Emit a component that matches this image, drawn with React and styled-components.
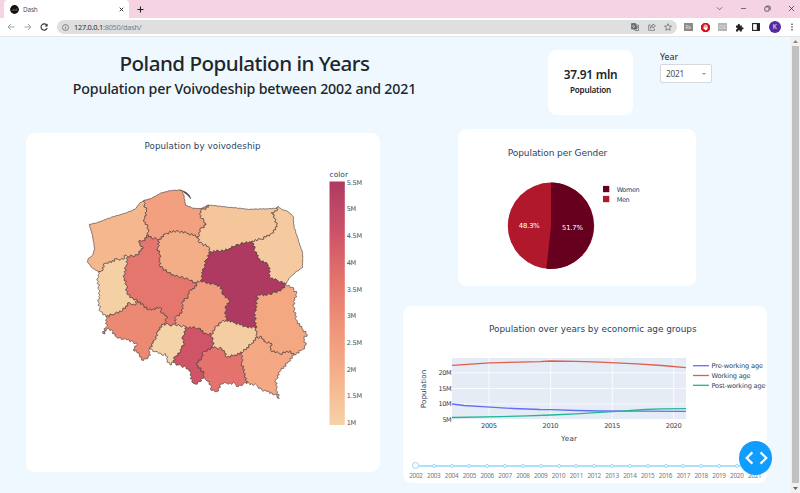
import React from "react";
import styled, { createGlobalStyle } from "styled-components";

const GlobalStyle = createGlobalStyle`
  * { box-sizing: border-box; }
  html, body { margin: 0; padding: 0; overflow: hidden; }
  body { font-family: "Noto Sans", "Open Sans", sans-serif; color: #212529; }
  svg { display: block; }
`;

const Window = styled.div`
  width: 800px;
  height: 493px;
  display: flex;
  flex-direction: column;
  overflow: hidden;
`;

/* ---------- browser frame ---------- */

const TabStrip = styled.header`
  height: 18px;
  flex: none;
  display: flex;
  align-items: stretch;
  background: #f5d3e3;
  padding-left: 4px;
`;

const Tab = styled.div`
  width: 125px;
  display: flex;
  align-items: center;
  padding: 0 5px 0 6px;
  gap: 4px;
  background: #fff;
  border-radius: 4px 4px 0 0;
  font-size: 6.4px;
  letter-spacing: -0.15px;
  color: #505256;
`;

const TabTitle = styled.span`
  flex: 1;
`;

const NewTab = styled.div`
  display: flex;
  align-items: center;
  padding-left: 8px;
  flex: 1;
`;

const WindowButtons = styled.div`
  display: flex;
  align-items: center;
  gap: 17px;
  padding: 0 5.5px 2px 0;
`;

const Toolbar = styled.div`
  height: 19px;
  flex: none;
  display: flex;
  align-items: center;
  background: #fff;
  border-bottom: 1px solid #e3e6e9;
  padding: 0 5px 0 7px;
`;

const NavButtons = styled.div`
  display: flex;
  gap: 8.5px;
  width: 50px;
`;

const AddressBar = styled.div`
  width: 620px;
  height: 14.6px;
  border-radius: 8px;
  background: #dfdfe0;
  display: flex;
  align-items: center;
  padding: 0 5px 0 5px;
`;

const Url = styled.span`
  flex: 1;
  padding-left: 5px;
  font-size: 7.4px;
  letter-spacing: -0.26px;
  color: #7b7d80;
  b { font-weight: 400; color: #2c2e31; }
`;

const AddressIcons = styled.div`
  display: flex;
  align-items: center;
  gap: 8.5px;
`;

const Extensions = styled.div`
  flex: 1;
  display: flex;
  align-items: center;
  justify-content: space-between;
  padding-left: 7px;
`;

const ExtensionTile = styled.span`
  width: 8.5px;
  height: 8.5px;
  background: ${(p) => p.$color};
  color: #e6e6e6;
  font-size: 5px;
  line-height: 8px;
  text-align: center;
`;

const Avatar = styled.span`
  width: 12px;
  height: 12px;
  border-radius: 50%;
  background: #512da8;
  color: #fff;
  font-size: 6.5px;
  line-height: 12px;
  text-align: center;
`;

const Icon = ({ size = 9, width = size, color = "#5f6368", stroke = 1, children }) => (
  <svg width={width} height={size} viewBox={`0 0 ${width} ${size}`} fill="none" stroke={color} strokeWidth={stroke}>
    {children}
  </svg>
);

/* ---------- page ---------- */

const Viewport = styled.div`
  flex: 1;
  display: flex;
  min-height: 0;
`;

const Page = styled.main`
  flex: 1;
  display: flex;
  gap: 23px;
  padding-left: 26px;
  background: #eff8ff;
`;

const Scrollbar = styled.div`
  width: 10px;
  display: flex;
  flex-direction: column;
  align-items: center;
  justify-content: space-between;
  background: #f1f1f1;
  padding: 3px 0;
`;

const Thumb = styled.div`
  width: 7px;
  flex: 1;
  margin: 2.5px 0 4px;
  background: #c1c1c1;
`;

const LeftColumn = styled.section`
  width: 354px;
  display: flex;
  flex-direction: column;
`;

const Heading = styled.div`
  height: 96px;
  width: 437px;
  padding-top: 12px;
  text-align: center;
  white-space: nowrap;
`;

const Title = styled.h1`
  margin: 0;
  font-size: 20.6px;
  line-height: 29px;
  letter-spacing: -0.5px;
  font-weight: 500;
`;

const Subtitle = styled.h2`
  margin: 0;
  font-size: 14.2px;
  line-height: 22px;
  letter-spacing: -0.16px;
  font-weight: 500;
`;

const Card = styled.div`
  flex: none;
  width: ${(p) => p.$width}px;
  height: ${(p) => p.$height}px;
  margin-left: ${(p) => p.$indent || 0}px;
  background: #fff;
  border-radius: 8.5px;
`;

const RightColumn = styled.section`
  width: 364px;
  display: flex;
  flex-direction: column;
`;

const Controls = styled.div`
  height: 91.5px;
  display: flex;
  gap: 27px;
  padding: 13px 0 0 145px;
`;

const StatCard = styled(Card)`
  display: flex;
  flex-direction: column;
  align-items: center;
  padding-top: 14px;
`;

const StatValue = styled.div`
  font-size: 11.9px;
  line-height: 20px;
  letter-spacing: -0.25px;
  font-weight: 600;
  white-space: nowrap;
`;

const StatLabel = styled.div`
  font-size: 8.1px;
  line-height: 12px;
  letter-spacing: -0.2px;
  font-weight: 600;
`;

const Field = styled.label`
  width: 52px;
  font-size: 8.8px;
  line-height: 14px;
`;

const Select = styled.div`
  height: 19px;
  display: flex;
  align-items: center;
  justify-content: space-between;
  padding: 0 5px;
  background: #fff;
  border: 1px solid #d4d9dd;
  border-radius: 2px;
  font-size: 8.2px;
  letter-spacing: -0.2px;
  color: #4a4c50;
`;

const Caret = styled.span`
  border: 2.5px solid transparent;
  border-top-color: #999;
  border-bottom: 0;
`;

const RightCards = styled.div`
  display: flex;
  flex-direction: column;
  gap: 20px;
`;

const Slider = styled.div`
  display: grid;
  grid-template-columns: repeat(20, 17.83px);
  margin: 3px 0 0 4px;
  height: 21px;
  align-items: start;
`;

const Mark = styled.div`
  display: flex;
  flex-direction: column;
  align-items: center;
  background: linear-gradient(#abe2fb, #abe2fb) no-repeat;
  background-size: ${(p) => (p.$edge ? "50%" : "100%")} 2px;
  background-position: ${(p) => (p.$edge === "start" ? "100%" : "0")} 3px;
  font-size: 6.4px;
  line-height: 8px;
  letter-spacing: -0.3px;
  color: #777;
`;

const Dot = styled.span`
  width: ${(p) => (p.$active ? 7 : 4)}px;
  height: ${(p) => (p.$active ? 7 : 4)}px;
  margin: ${(p) => (p.$active ? "0.5px 0 3px" : "2px 0 4.5px")};
  border: 1px solid #9bd8f5;
  border-radius: 50%;
  background: #fff;
`;

const DebugButton = styled.div`
  position: absolute;
  left: 738.7px;
  top: 441.3px;
  width: 33.6px;
  height: 33.6px;
  border-radius: 50%;
  background: #119dff;
`;

const Label = styled.text`
  font-family: "DejaVu Sans", sans-serif;
  font-size: ${(p) => p.$size}px;
  fill: ${(p) => p.$fill || "#2a3f5f"};
`;

/* ---------- map ---------- */

/* Borders between voivodeships, three units to the pixel. */
const borders = {
  LA: "55,275 38,265 22,245 24,237 38,225 44,205 38,170 28,133 45,130 100,110 140,98 165,88 180,68 195,60",
  AE: "195,60 215,55 245,38 270,32 302,30 312,45 316,75 340,85 365,85 385,75",
  EF: "385,75 430,80 510,88 590,85 595,80",
  FM: "595,80 605,88 625,95 640,110 642,140 655,180 668,220 668,262 645,278 630,292 617,313",
  Ma: "617,313 635,322 650,340 640,380 650,420 665,445 682,464 672,475 678,495 668,508 642,525",
  ac: "642,525 625,545 600,575 587,600 590,625 598,655 585,643 545,630 530,615 500,610",
  cY: "500,610 490,612 475,620 465,610 440,610 425,612 410,635 395,632 392,615 378,600 368,595",
  YT: "368,595 360,605 345,612 335,605 332,580 318,562 295,555 280,547",
  TS: "280,547 270,555 262,540 258,522 245,525 225,515 210,507",
  SO: "210,507 207,520 212,525 205,530 190,542 178,525 160,508 172,495 160,485 130,478 105,468 95,450 80,447 75,462 68,460 80,440 78,410",
  OL: "78,410 62,395 55,365 58,330 52,295 55,275",
  AB: "195,60 193,75 200,95 192,118 203,140 205,165",
  BK: "205,165 190,182 175,185 180,195 190,205 172,225 143,230",
  KL: "143,230 138,225 130,238 110,237 85,250 75,250 65,273 55,275",
  BC: "205,165 215,175 238,178",
  CD: "238,178 260,160 290,152 320,160 355,170",
  DE: "355,170 360,150 378,135 372,122 360,112 362,92 385,82 385,75",
  DH: "355,170 357,188 385,200 392,215",
  HG: "392,215 430,213 460,200 490,190 517,183",
  GF: "517,183 545,178 575,160 592,140 585,115 575,98 590,93 595,80",
  GM: "517,183 525,215 540,240 565,255 572,295 595,303 617,313",
  HI: "392,215 378,240 372,265 362,303",
  CJ: "238,178 232,205 240,225 240,260 265,278 295,290 325,298 345,308",
  JI: "345,308 362,303",
  KN: "143,230 137,260 132,285 138,315 140,340 155,353 172,362",
  NO: "172,362 165,376 148,368 125,395 105,400 78,410",
  NP: "172,362 205,390 240,382 245,400 260,408 258,425 250,433",
  PQ: "250,433 265,432 275,438 285,433",
  QJ: "285,433 288,410 305,400 308,365 325,350 330,330 350,318 345,308",
  QR: "285,433 300,438 320,442",
  RU: "320,442 355,445 375,460 395,463",
  UV: "395,463 405,445 425,425 438,420",
  VI: "438,420 436,385 448,362 430,345 422,320 395,312 362,303",
  VW: "438,420 460,428 500,440 528,445",
  WM: "528,445 525,395 535,345 570,343 605,330 617,313",
  Wb: "528,445 530,460 532,472",
  ba: "532,472 545,470 552,485 575,490 572,510 600,522 630,512 642,525",
  bZ: "532,472 515,490 487,518",
  ZX: "487,518 465,525 440,532 425,505 400,503",
  UX: "395,463 398,480 400,503",
  XY: "400,503 370,515 365,535 350,555 372,580 368,595",
  Zc: "487,518 485,550 495,580 500,610",
  PS: "250,433 235,450 225,480 210,507",
  RT: "320,442 308,470 312,490 302,515 285,530 280,547",
};

const smooth = new Set(["LA", "AE", "EF", "FM"]);
const wiggle = [0, 4, -2.8, 2.6, -4, -1.2, 3.6, -3.8, 1.8, -2.8, 4.2];

/* Breaks a border into short steps that stray to either side of its line. */
function roughen(points, amount) {
  const out = [points[0]];
  let n = 0;
  for (let i = 1; i < points.length; i++) {
    const [x0, y0] = points[i - 1];
    const [x1, y1] = points[i];
    const length = Math.hypot(x1 - x0, y1 - y0);
    const steps = Math.max(1, Math.round(length / 5));
    for (let s = 1; s < steps; s++) {
      const t = s / steps;
      const w = wiggle[++n % wiggle.length] * amount;
      out.push([x0 + (x1 - x0) * t - ((y1 - y0) / length) * w, y0 + (y1 - y0) * t + ((x1 - x0) / length) * w]);
    }
    out.push(points[i]);
  }
  return out;
}

const lines = Object.fromEntries(
  Object.entries(borders).map(([key, text]) => [
    key,
    roughen(text.split(" ").map((p) => p.split(",").map(Number)), smooth.has(key) ? 0.2 : 0.9),
  ])
);

function outline(ring) {
  const points = ring.split(" ").flatMap((key) => {
    if (lines[key]) return lines[key];
    return [...lines[key[1] + key[0]]].reverse();
  });
  return "M" + points.map(([x, y]) => `${x.toFixed(1)} ${y.toFixed(1)}`).join("L") + "Z";
}

const voivodeships = [
  ["LA AB BK KL", "#f5b88e"],
  ["AE ED DC CB BA", "#f3a080"],
  ["EF FG GH HD DE", "#f5c59b"],
  ["FM MG GF", "#f5caa0"],
  ["CD DH HI IJ JC", "#f3ad87"],
  ["BC CJ JQ QP PN NK KB", "#e5766d"],
  ["LK KN NO OL", "#f5d0a5"],
  ["HG GM MW WV VI IH", "#ae3a62"],
  ["JI IV VU UR RQ QJ", "#f29c7e"],
  ["ON NP PS SO", "#ec8973"],
  ["PQ QR RT TS SP", "#f5d3a8"],
  ["RU UX XY YT TR", "#cf5468"],
  ["UV VW Wb bZ ZX XU", "#f5cda2"],
  ["XZ Zc cY YX", "#e4736d"],
  ["Zb ba ac cZ", "#f4a984"],
  ["WM Ma ab bW", "#f3a882"],
];

const scaleTicks = ["5.5M", "5M", "4.5M", "4M", "3.5M", "3M", "2.5M", "2M", "1.5M", "1M"];

const VoivodeshipMap = () => (
  <svg width="354" height="339" viewBox="26 133 354 339">
    <defs>
      <linearGradient id="scale" x1="0" y1="0" x2="0" y2="1">
        <stop offset="0" stopColor="#ae3a62" />
        <stop offset="0.22" stopColor="#cf5468" />
        <stop offset="0.42" stopColor="#e5766d" />
        <stop offset="0.62" stopColor="#f0977c" />
        <stop offset="0.8" stopColor="#f5b28a" />
        <stop offset="1" stopColor="#f6d2a9" />
      </linearGradient>
    </defs>
    <Label $size={8.7} x="144.5" y="149" textLength="116">Population by voivodeship</Label>
    <g transform="translate(80 180) scale(0.33333)" stroke="#4c3c3c" strokeWidth="1.9" strokeLinejoin="round">
      {voivodeships.map(([ring, color]) => (
        <path key={ring} d={outline(ring)} fill={color} />
      ))}
      <path d="M302 30L318 37L328 46L332 56L323 45L310 36" fill="#4c3c3c" />
    </g>
    <Label $size={7.4} x="329.5" y="176.5" textLength="18.5">color</Label>
    <rect x="329.5" y="181.5" width="15.3" height="243.5" fill="url(#scale)" />
    {scaleTicks.map((tick, i) => (
      <Label key={tick} $size={6.5} $fill="#3d4f6d" x="346.7" y={184.7 + i * 26.7} textLength={tick.length > 2 ? 15.5 : 9.5}>
        {tick}
      </Label>
    ))}
  </svg>
);

const GenderPie = () => (
  <svg width="238" height="157" viewBox="458 128.5 238 157">
    <Label $size={9} x="507.8" y="155.3" textLength="99.5">Population per Gender</Label>
    <circle cx="551" cy="225.3" r="43.2" fill="#b2182b" />
    <path d="M551 182.1A43.2 43.2 0 1 1 546.4 268.3L551 225.3Z" fill="#67001f" />
    <Label $size={6.8} $fill="#fff" x="518.8" y="227.3" textLength="21">48.3%</Label>
    <Label $size={6.8} $fill="#fff" x="562" y="229.2" textLength="21">51.7%</Label>
    <rect x="603" y="185.4" width="6.3" height="6.3" fill="#67001f" />
    <rect x="603" y="195.4" width="6.3" height="6.3" fill="#b2182b" />
    <Label $size={6.5} x="616.7" y="191.2" textLength="23">Women</Label>
    <Label $size={6.5} x="616.7" y="201.2" textLength="13">Men</Label>
  </svg>
);

const series = [
  ["Pre-working age", "#636efa", "452,403.5 464,405 490,406.7 513,408 540,409 551,409.1 576,410 600,410.5 637,410.7 686,410.8", 51.5],
  ["Working age", "#dd5f4c", "452,364.8 490,362.3 540,361.2 550,360.5 576,360.8 600,361.7 637,363.3 662,365 686,367.2", 39],
  ["Post-working age", "#20b894", "452,417 500,416.2 527,415.3 551,414.5 576,413.3 600,411.8 625,410.4 645,409 662,408.4 686,408.2", 54],
];

const AgeChart = () => (
  <svg width="364" height="153" viewBox="403 305.5 364 153">
    <Label $size={8.9} x="489" y="331.5" textLength="207.5">Population over years by economic age groups</Label>
    <rect x="452" y="357.5" width="234" height="61.5" fill="#e5ecf6" />
    <g stroke="#fff" strokeWidth="0.8">
      {[372.3, 388, 403.5, 419].map((y) => <path key={y} d={`M452 ${y}H686`} />)}
      {[489, 550.7, 612.3, 673.7].map((x) => <path key={x} d={`M${x} 357.5V419`} />)}
    </g>
    {["20M", "15M", "10M", "5M"].map((tick, i) => (
      <Label key={tick} $size={6.5} x="451.5" y={374.8 + i * 15.5} textAnchor="end" textLength={tick.length > 2 ? 13 : 9}>{tick}</Label>
    ))}
    {["2005", "2010", "2015", "2020"].map((tick, i) => (
      <Label key={tick} $size={6.7} x={489 + i * 61.6} y="427" textAnchor="middle" textLength="16">{tick}</Label>
    ))}
    <Label $size={7.2} x="569" y="440.8" textAnchor="middle" textLength="16">Year</Label>
    <Label $size={7.2} transform="translate(426 388.5) rotate(-90)" textAnchor="middle" textLength="38.5">Population</Label>
    {series.map(([name, color, points, length], i) => (
      <g key={name}>
        <polyline points={points} fill="none" stroke={color} strokeWidth="1.3" />
        <path d={`M693 ${365.2 + i * 9.8}h16`} stroke={color} strokeWidth="1.3" />
        <Label $size={6.6} x="711.5" y={367.6 + i * 9.8} textLength={length}>{name}</Label>
      </g>
    ))}
  </svg>
);

const years = Array.from({ length: 20 }, (_, i) => 2002 + i);
const edgeOf = (i) => (i === 0 ? "start" : i === years.length - 1 ? "end" : undefined);

export default function App() {
  return (
    <Window>
      <GlobalStyle />
      <TabStrip>
        <Tab>
          <svg width="9" height="9" viewBox="0 0 9 9">
            <circle cx="4.5" cy="4.5" r="4.4" fill="#111" />
            <path d="M2.3 6V4.5M3.8 6V3.8M5.2 6V4.2M6.7 6V3.4" stroke="#777" strokeWidth="0.7" />
          </svg>
          <TabTitle>Dash</TabTitle>
          <Icon size={5} color="#222" stroke={0.9}><path d="M0.7 0.7l3.6 3.6M4.3 0.7L0.7 4.3" /></Icon>
        </Tab>
        <NewTab>
          <Icon size={7} color="#222" stroke={1.1}><path d="M3.5 0.5v6M0.5 3.5h6" /></Icon>
        </NewTab>
        <WindowButtons>
          <Icon size={7} stroke={0.8} color="#555"><path d="M1 2.3l2.5 2.5L6 2.3" /></Icon>
          <Icon size={7} width={7} stroke={0.8} color="#555"><path d="M1 3.5h5" /></Icon>
          <Icon size={7} stroke={0.8} color="#444"><rect x="0.8" y="1.9" width="4.2" height="4.2" rx="0.8" /><path d="M2.2 1.1h3q1 0 1 1v3" /></Icon>
          <Icon size={7} stroke={0.8} color="#444"><path d="M1 1l5 5M6 1L1 6" /></Icon>
        </WindowButtons>
      </TabStrip>
      <Toolbar>
        <NavButtons>
          <Icon size={8} stroke={0.9} color="#96989b"><path d="M7.5 4H1.2M4 1L1 4l3 3" /></Icon>
          <Icon size={8} stroke={0.9} color="#96989b"><path d="M0.5 4h6.3M4 1l3 3-3 3" /></Icon>
          <Icon size={8} stroke={1.1} color="#333"><path d="M6.6 2.1A3.1 3.1 0 1 0 7.1 5" /><path d="M7.6 0.5v3H4.6z" fill="#333" stroke="none" /></Icon>
        </NavButtons>
        <AddressBar>
          <Icon size={7} stroke={0.7}><circle cx="3.5" cy="3.5" r="3" /><path d="M3.5 3v2.2M3.5 1.7v0.7" /></Icon>
          <Url><b>127.0.0.1</b>:8050/dash/</Url>
          <AddressIcons>
            <Icon size={8} stroke={0.7}><path d="M0.5 0.5h4l1.5 5.5H0.5z" fill="#5f6368" /><path d="M5 2h2.5v5.5H4L3.3 6M4.8 3.7h2.3M5.8 3q0.5 2.5-0.8 3" /><path d="M3.6 2.6A1.2 1.2 0 1 0 3.8 3.6H2.8" stroke="#dfdfe0" /></Icon>
            <Icon size={8} stroke={0.7}><path d="M2.8 2H0.7v5.3h5.8V5.7M5 1l2.5 2L5 5V3.9Q3.3 3.8 2.2 5.3 2.5 2.3 5 2.2z" /></Icon>
            <Icon size={8} stroke={0.7}><path d="M4 0.7l1 2.3 2.5.2-1.9 1.6.6 2.5L4 6 1.8 7.3l.6-2.5L.5 3.2 3 3z" /></Icon>
          </AddressIcons>
        </AddressBar>
        <Extensions>
          <ExtensionTile $color="#8a8a8a">Rs</ExtensionTile>
          <svg width="9" height="9" viewBox="0 0 9 9">
            <path d="M2.6 0h3.8L9 2.6v3.8L6.4 9H2.6L0 6.4V2.6z" fill="#d3121b" />
            <path d="M3.2 5V2.6M4.2 4.6V1.8M5.2 4.6V2.1M6.1 5V2.8" stroke="#fff" strokeWidth="0.8" strokeLinecap="round" />
            <path d="M2.8 4.4h3.7v1.4q-.4 1.4-1.7 1.4-1 0-1.5-1.2L2 4.9z" fill="#fff" />
          </svg>
          <ExtensionTile $color="#b5b5b5">OS</ExtensionTile>
          <svg width="9" height="9" viewBox="0 0 9 9" fill="#222">
            <path d="M1 2.5h1.8q-.4-1.8 1-1.8t1 1.8H6.8v1.9q1.7-.4 1.7 1t-1.7 1v2.1H4.9Q5 7 4 7T3 8.5H1V6.6q1.4 0 1.4-1.1T1 4.4z" />
          </svg>
          <svg width="8" height="8" viewBox="0 0 8 8">
            <rect x="0.6" y="0.6" width="6.8" height="6.8" fill="#fff" stroke="#222" strokeWidth="1.1" />
            <rect x="4.8" y="0.5" width="2.7" height="7" fill="#222" />
          </svg>
          <Avatar>K</Avatar>
          <svg width="6" height="8" viewBox="0 0 6 8" fill="#333">
            <circle cx="3" cy="1.2" r="0.8" /><circle cx="3" cy="4" r="0.8" /><circle cx="3" cy="6.8" r="0.8" />
          </svg>
        </Extensions>
      </Toolbar>

      <Viewport>
        <Page>
          <LeftColumn>
            <Heading>
              <Title>Poland Population in Years</Title>
              <Subtitle>Population per Voivodeship between 2002 and 2021</Subtitle>
            </Heading>
            <Card $width={354} $height={339}>
              <VoivodeshipMap />
            </Card>
          </LeftColumn>
          <RightColumn>
            <Controls>
              <StatCard $width={85} $height={65}>
                <StatValue>37.91 mln</StatValue>
                <StatLabel>Population</StatLabel>
              </StatCard>
              <Field>
                Year
                <Select>2021<Caret /></Select>
              </Field>
            </Controls>
            <RightCards>
              <Card $width={238} $height={157} $indent={55}>
                <GenderPie />
              </Card>
              <Card $width={364} $height={177}>
                <AgeChart />
                <Slider>
                  {years.map((year, i) => (
                    <Mark key={year} $edge={edgeOf(i)}>
                      <Dot $active={i === 0} />
                      {year}
                    </Mark>
                  ))}
                </Slider>
              </Card>
            </RightCards>
          </RightColumn>
        </Page>
        <Scrollbar>
          <svg width="5" height="3" viewBox="0 0 5 3"><path d="M2.5 0L5 3H0z" fill="#8b8b8b" /></svg>
          <Thumb />
          <svg width="5" height="3" viewBox="0 0 5 3"><path d="M0 0h5L2.5 3z" fill="#666" /></svg>
        </Scrollbar>
      </Viewport>
      <DebugButton>
        <svg width="33.6" height="33.6" viewBox="0 0 33.6 33.6" fill="none" stroke="#fff" strokeWidth="2.2">
          <path d="M13.4 11.4L7.7 17l5.7 5.6M21.6 11.4l5.7 5.6-5.7 5.6" />
        </svg>
      </DebugButton>
    </Window>
  );
}
